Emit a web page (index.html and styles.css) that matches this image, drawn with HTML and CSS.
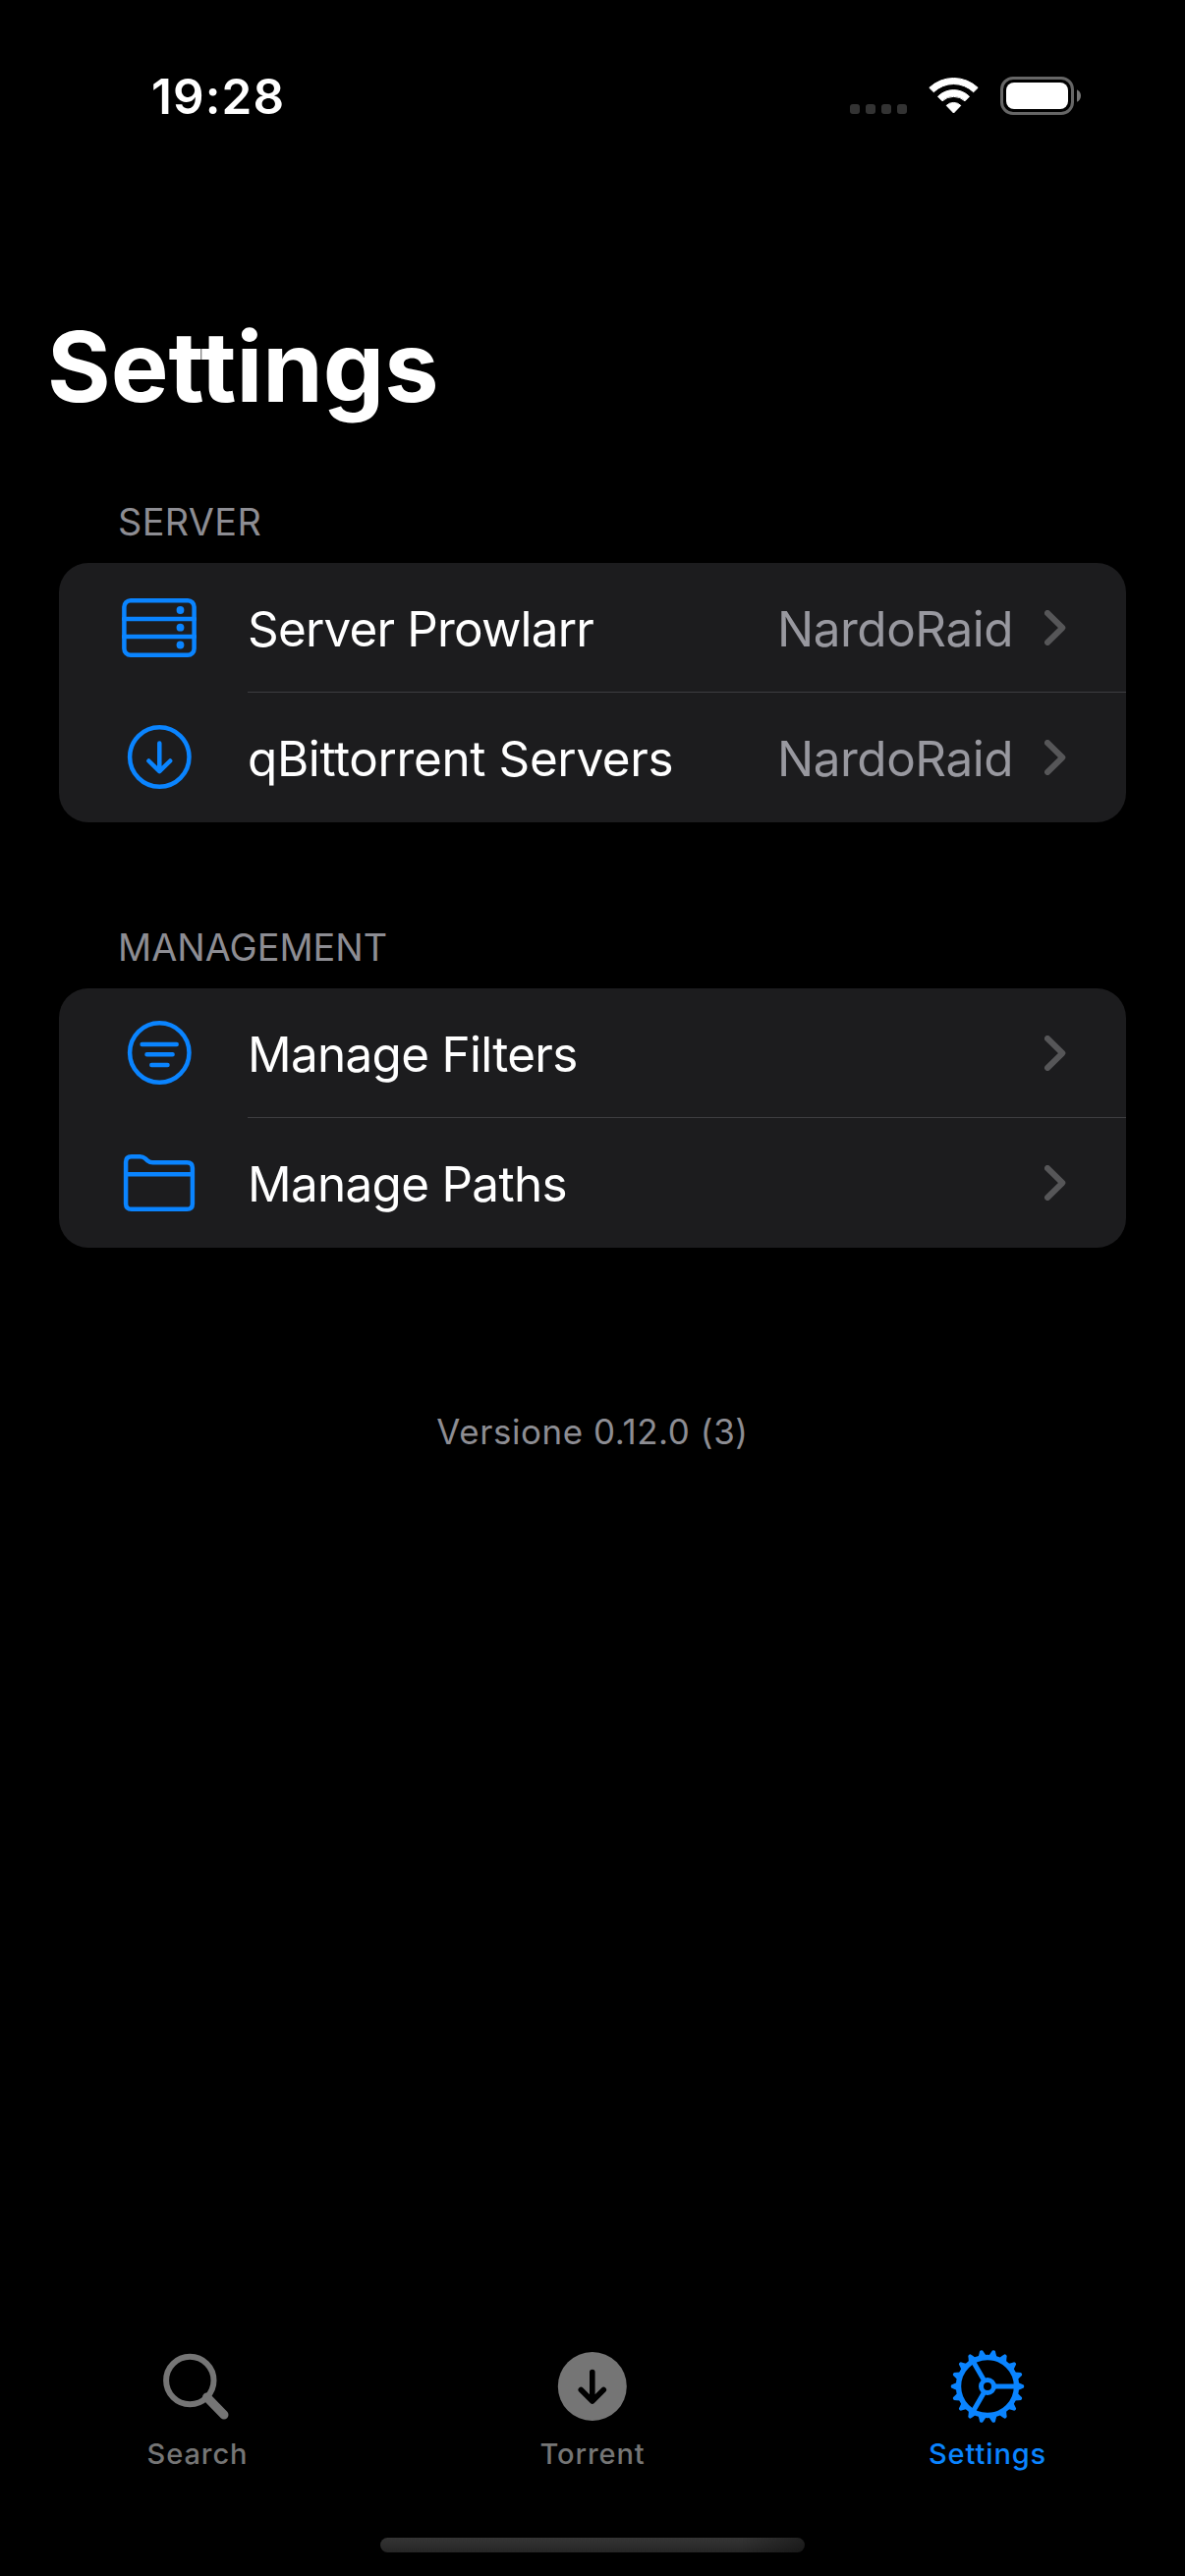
FILE: index.html
```html
<!DOCTYPE html>
<html lang="en">
<head>
<meta charset="utf-8">
<title>Settings</title>
<link rel="stylesheet" href="styles.css">
</head>
<body>
<div class="screen">
  <header class="status">
    <span class="time">19:28</span>
    <div class="indicators">
      <div class="dots"><i></i><i></i><i></i><i></i></div>
      <svg class="wifi" width="51" height="38" viewBox="0 0 51 38">
        <path d="M.8 11.3A36 36 0 0 1 50.2 11.3L45.7 15.7A29 29 0 0 0 5.3 15.7Z"/>
        <path d="M9.5 20.2A22.7 22.7 0 0 1 41.5 20.2L37 24.8A17 17 0 0 0 14 24.8Z"/>
        <path d="M18.2 29.4A10.5 10.5 0 0 1 32.8 29.4L25.5 37Z"/>
      </svg>
      <svg class="battery" width="83" height="39" viewBox="0 0 83 39">
        <rect x="1.5" y="1.5" width="72" height="36" rx="11.5" fill="none" stroke="#666" stroke-width="3"/>
        <rect x="6" y="6" width="63" height="27" rx="8" fill="#fff"/>
        <path d="M78 13.2C80.6 14.5 82 16.8 82 19.5C82 22.2 80.6 24.5 78 25.8Z" fill="#757575"/>
      </svg>
    </div>
  </header>
  <h1 class="title">Settings</h1>

  <section class="group">
    <h2 class="heading heading-server">SERVER</h2>
    <div class="card">
      <div class="row">
        <svg class="icon" width="76" height="66" viewBox="0 0 76 66">
          <rect x="2.4" y="5.2" width="71.2" height="55.6" rx="6.5"/>
          <path d="M2 23.9H74M2 41.9H74"/>
          <g class="solid"><circle cx="59.5" cy="15" r="3.9"/><circle cx="59.5" cy="32.7" r="3.9"/><circle cx="59.5" cy="50.5" r="3.9"/></g>
        </svg>
        <div class="body"><span class="label prowlarr">Server Prowlarr</span><span class="value">NardoRaid</span>
          <svg class="chevron" width="22" height="36" viewBox="0 0 22 36"><path d="M3 3L18.3 18L3 33"/></svg></div>
      </div>
      <div class="row">
        <svg class="icon" width="76" height="66" viewBox="0 0 76 66">
          <circle cx="38.3" cy="32.5" r="30.2"/>
          <path d="M38.3 18.5V47M27.4 36.5L38.3 47.2L49.2 36.5"/>
        </svg>
        <div class="body"><span class="label qbittorrent">qBittorrent Servers</span><span class="value">NardoRaid</span>
          <svg class="chevron" width="22" height="36" viewBox="0 0 22 36"><path d="M3 3L18.3 18L3 33"/></svg></div>
      </div>
    </div>
  </section>

  <section class="group second">
    <h2 class="heading">MANAGEMENT</h2>
    <div class="card">
      <div class="row">
        <svg class="icon" width="76" height="66" viewBox="0 0 76 66">
          <circle cx="38.3" cy="32.5" r="30.2"/>
          <path d="M20.6 24H55.7M25.5 34.3H51.6M30.3 45H46.5"/>
        </svg>
        <div class="body"><span class="label">Manage Filters</span>
          <svg class="chevron" width="22" height="36" viewBox="0 0 22 36"><path d="M3 3L18.3 18L3 33"/></svg></div>
      </div>
      <div class="row">
        <svg class="icon" width="76" height="66" viewBox="0 0 76 66">
          <path d="M4.1 53.5V11.8Q4.1 6.2 9.7 6.2H18.5Q21.5 6.2 23.7 8.2L26.3 10.5Q28.5 12.2 31.5 12.2H66.3Q71.9 12.2 71.9 17.8V54.2Q71.9 59.8 66.3 59.8H9.7Q4.1 59.8 4.1 54.2ZM4.1 24.2H71.9"/>
        </svg>
        <div class="body"><span class="label">Manage Paths</span>
          <svg class="chevron" width="22" height="36" viewBox="0 0 22 36"><path d="M3 3L18.3 18L3 33"/></svg></div>
      </div>
    </div>
  </section>

  <p class="version">Versione 0.12.0 (3)</p>

  <nav class="tabs">
    <div class="tab">
      <svg width="78" height="78" viewBox="0 0 78 78">
        <circle cx="31.3" cy="33" r="24.2" fill="none" stroke="currentColor" stroke-width="6"/>
        <path d="M48.5 50L66 68" fill="none" stroke="currentColor" stroke-width="9" stroke-linecap="round"/>
      </svg>
      <span>Search</span>
    </div>
    <div class="tab">
      <svg width="78" height="78" viewBox="0 0 78 78">
        <circle cx="38.8" cy="39" r="35" fill="currentColor"/>
        <path d="M38.8 24.5V53.5M27.3 42.5L38.8 54L50.3 42.5" fill="none" stroke="#000" stroke-width="5.6" stroke-linecap="round" stroke-linejoin="round"/>
      </svg>
      <span>Torrent</span>
    </div>
    <div class="tab active">
      <svg width="78" height="78" viewBox="-39 -39 78 78">
        <defs><path id="tooth" d="M30 -4.6L34.500 -2.500L36.800 -1.500Q37.900 0 36.800 1.500L34.500 2.500L30 4.600Z"/></defs>
        <g fill="none" stroke="currentColor" stroke-width="5">
          <circle r="29.500" stroke-width="5.400"/>
          <circle r="6.500"/>
          <path d="M8 0H28M-4 -6.930L-14 -24.250M-4 6.930L-14 24.250"/>
        </g>
        <g fill="currentColor">
          <use href="#tooth"/><use href="#tooth" transform="rotate(20)"/><use href="#tooth" transform="rotate(40)"/><use href="#tooth" transform="rotate(60)"/><use href="#tooth" transform="rotate(80)"/><use href="#tooth" transform="rotate(100)"/><use href="#tooth" transform="rotate(120)"/><use href="#tooth" transform="rotate(140)"/><use href="#tooth" transform="rotate(160)"/><use href="#tooth" transform="rotate(180)"/><use href="#tooth" transform="rotate(200)"/><use href="#tooth" transform="rotate(220)"/><use href="#tooth" transform="rotate(240)"/><use href="#tooth" transform="rotate(260)"/><use href="#tooth" transform="rotate(280)"/><use href="#tooth" transform="rotate(300)"/><use href="#tooth" transform="rotate(320)"/><use href="#tooth" transform="rotate(340)"/>
        </g>
      </svg>
      <span>Settings</span>
    </div>
  </nav>
  <div class="home"></div>
</div>
</body>
</html>
```
FILE: styles.css
```css
* { box-sizing: border-box; }
body { margin: 0; background: #000; font-family: Inter, "Liberation Sans", sans-serif; }
h1, h2, p { margin: 0; font-weight: 400; }
.screen { display: flex; flex-direction: column; width: 1206px; height: 2622px; overflow: hidden; background: #000; color: #fff; }

.status { display: flex; justify-content: space-between; height: 162px; padding: 68px 105px 0 154px; }
.time { height: 60px; line-height: 60px; font-size: 49.4px; font-weight: 600; letter-spacing: 1.1px; }
.indicators { display: flex; height: 39px; margin-top: 10px; }
.dots { display: flex; gap: 6px; margin: 28px 22px 0 0; }
.dots i { width: 10px; height: 10px; border-radius: 3px; background: #333; }
.wifi { margin-right: 22px; fill: #fff; stroke: #fff; stroke-width: 1; stroke-linejoin: round; }

.title { height: 120px; margin: 151px 0 0 48px; line-height: 120px; font-size: 98.8px; font-weight: 700; }

.group { padding: 0 60px; }
.group:first-of-type { margin-top: 74px; }
.heading { height: 66px; padding-left: 60px; line-height: 48px; font-size: 37.8px; color: #8d8d93; }
.heading-server { letter-spacing: 0.4px; }
.group.second { margin-top: 103px; }
.card { overflow: hidden; border-radius: 30px; background: #1c1c1e; }
.row { display: flex; align-items: center; height: 132px; padding-left: 64px; }
.icon { margin-right: 52px; fill: none; stroke: #0a84ff; stroke-width: 4.5; stroke-linecap: round; stroke-linejoin: round; }
.solid { fill: #0a84ff; stroke: none; }
.body { flex: 1; display: flex; align-items: center; height: 132px; padding-right: 61px; border-bottom: 1px solid #3d3d41; font-size: 49.4px; line-height: 60px; }
.row:last-child .body { border-bottom-color: transparent; }
.label { padding-top: 2px; margin-right: auto; letter-spacing: -0.68px; }
.prowlarr { letter-spacing: -0.8px; }
.qbittorrent { letter-spacing: -0.36px; }
.value { padding-top: 2px; margin-right: 32px; letter-spacing: -0.45px; color: #98989f; }
.chevron { fill: none; stroke: #565658; stroke-width: 6; stroke-linecap: round; stroke-linejoin: round; }

.version { margin-top: 162px; text-align: center; font-size: 34.9px; line-height: 50px; letter-spacing: 0.6px; color: #8d8d93; }

.tabs { display: grid; grid-template-columns: repeat(3, 1fr); margin-top: auto; height: 193px; }
.tab { display: flex; flex-direction: column; align-items: center; color: #757575; font-size: 29px; font-weight: 500; line-height: 36px; letter-spacing: 0.9px; }
.tab span { margin-top: 12px; }
.active { color: #0a84ff; }
.home { align-self: center; width: 432px; height: 15px; margin-bottom: 24px; border-radius: 7.5px; background: linear-gradient(90deg, transparent 85%, #00000060), linear-gradient(#343434, #262626); }
```
